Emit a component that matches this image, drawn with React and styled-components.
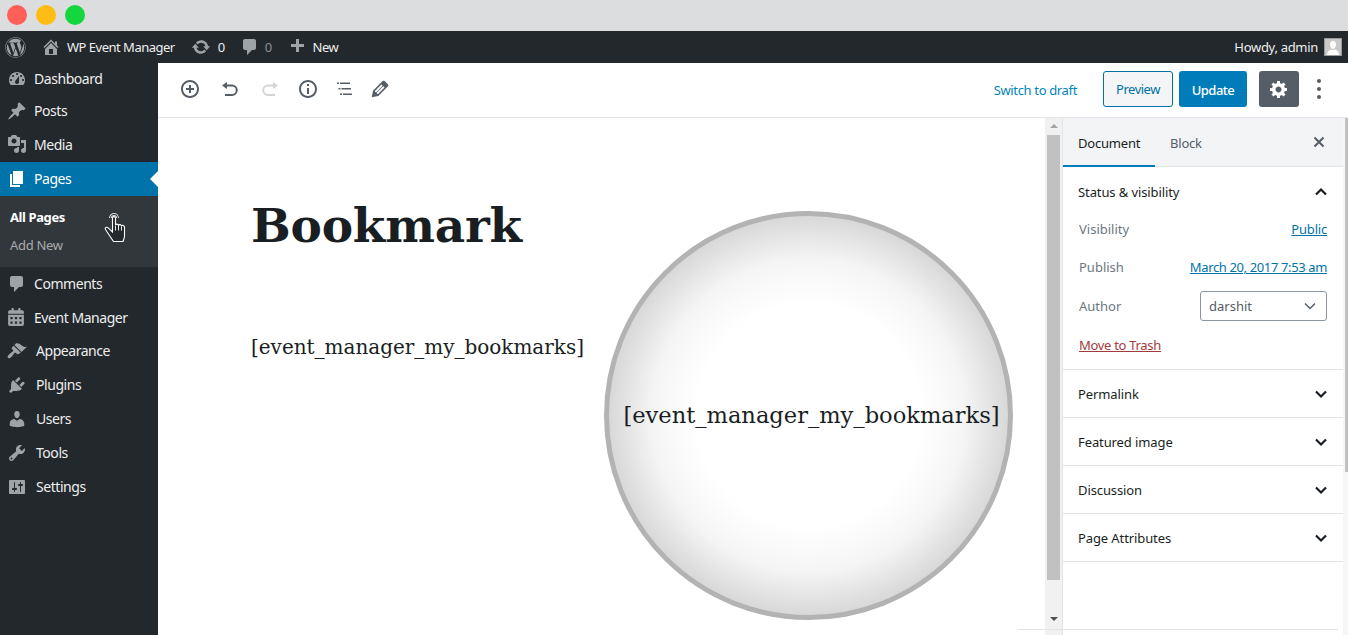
import React from "react";
import styled, { createGlobalStyle } from "styled-components";
import { FaWordpress, FaCalendarAlt } from "react-icons/fa";

const uiFont = `"Noto Sans", "Open Sans", sans-serif`;
const serifFont = `"DejaVu Serif", "Liberation Serif", serif`;

const GlobalStyle = createGlobalStyle`
  html, body {
    margin: 0;
    padding: 0;
    background: #fff;
    overflow: hidden;
  }
  * {
    box-sizing: border-box;
  }
`;

const Page = styled.div`
  width: 1348px;
  height: 635px;
  position: relative;
  overflow: hidden;
  display: flex;
  flex-direction: column;
  font-family: ${uiFont};
`;

const TitleBar = styled.div`
  height: 31px;
  flex: none;
  background: #dcdddf;
  display: flex;
  align-items: center;
  gap: 9px;
  padding: 0 0 1px 7px;
`;

const Light = styled.span`
  width: 20px;
  height: 20px;
  border-radius: 50%;
  background: ${({ $color }) => $color};
`;

const AdminBar = styled.div`
  height: 32px;
  flex: none;
  background: #23282d;
  color: #eee;
  font-size: 13px;
  display: flex;
  align-items: center;
  letter-spacing: -0.5px;
  svg {
    fill: #9ea3a8;
    flex: none;
  }
`;

const BarItem = styled.div`
  display: flex;
  align-items: center;
  gap: ${({ $gap }) => $gap || 6}px;
  margin-left: ${({ $left }) => $left}px;
`;

const MutedCount = styled.span`
  color: #8c8f94;
`;

const Howdy = styled.div`
  margin-left: auto;
  margin-right: 6px;
  display: flex;
  align-items: center;
  gap: 6px;
  letter-spacing: -0.3px;
`;

const Avatar = styled.div`
  width: 18px;
  height: 18px;
  background: #c9c9c9;
  border: 1px solid #999;
  display: flex;
  align-items: flex-end;
  justify-content: center;
  svg {
    fill: #fff;
  }
`;

const Body = styled.div`
  flex: 1;
  display: flex;
  min-height: 0;
`;

const Sidebar = styled.nav`
  width: 158px;
  flex: none;
  background: #23282d;
  color: #eee;
  font-size: 14px;
  letter-spacing: -0.45px;
`;

const MenuItem = styled.div`
  height: ${({ $height }) => $height || 34}px;
  display: flex;
  align-items: center;
  position: relative;
  padding-left: ${({ $pad }) => $pad || 7}px;
  padding-bottom: 1px;
  gap: ${({ $gap }) => $gap || 7}px;
  background: ${({ $active }) => ($active ? "#0073aa" : "transparent")};
  color: ${({ $active }) => ($active ? "#fff" : "#eee")};
  svg {
    flex: none;
    fill: ${({ $active }) => ($active ? "#fff" : "#9ea3a8")};
  }
  ${({ $active }) =>
    $active &&
    `&::after {
      content: "";
      position: absolute;
      right: 0;
      top: 9px;
      border: 8px solid transparent;
      border-right-color: #fff;
      border-left-width: 0;
    }`}
`;

const SubMenu = styled.div`
  height: 71px;
  background: #32373c;
  padding: 7px 0 0 10px;
  font-size: 13px;
  position: relative;
`;

const SubItem = styled.div`
  height: 28px;
  display: flex;
  align-items: center;
  letter-spacing: ${({ $current }) => ($current ? "-0.4px" : "-0.3px")};
  font-weight: ${({ $current }) => ($current ? 700 : 400)};
  color: ${({ $current }) => ($current ? "#fff" : "#a8abae")};
`;

const HandCursor = styled.svg`
  position: absolute;
  left: 103px;
  top: 16px;
`;

const Main = styled.div`
  flex: 1;
  min-width: 0;
  display: flex;
  flex-direction: column;
`;

const Toolbar = styled.div`
  height: 55px;
  flex: none;
  border-bottom: 1px solid #e2e4e7;
  display: flex;
  align-items: center;
  padding: 0 27px 2px 22px;
  background: #fff;
`;

const ToolIcons = styled.div`
  display: flex;
  align-items: center;
`;

const ToolSlot = styled.div`
  margin-right: ${({ $gap }) => $gap || 0}px;
  svg {
    display: block;
    fill: ${({ $disabled }) => ($disabled ? "#d2d4d6" : "#555d66")};
  }
`;

const ToolActions = styled.div`
  margin-left: auto;
  display: flex;
  align-items: center;
`;

const DraftLink = styled.span`
  color: #0085ba;
  font-size: 13px;
  letter-spacing: -0.35px;
  margin-right: 26px;
  padding-top: 1px;
`;

const PreviewButton = styled.div`
  width: 70px;
  height: 36px;
  background: #f3f5f6;
  border: 1px solid #0071a1;
  border-radius: 3px;
  color: #0071a1;
  font-size: 13px;
  letter-spacing: -0.5px;
  display: flex;
  align-items: center;
  justify-content: center;
  margin-right: 6px;
`;

const UpdateButton = styled.div`
  width: 68px;
  height: 36px;
  background: #007cba;
  border-radius: 3px;
  color: #fff;
  font-size: 13px;
  font-weight: 500;
  letter-spacing: -0.5px;
  padding-top: 1px;
  display: flex;
  align-items: center;
  justify-content: center;
  margin-right: 12px;
`;

const GearButton = styled.div`
  width: 40px;
  height: 36px;
  background: #555d66;
  border-radius: 3px;
  display: flex;
  align-items: center;
  justify-content: center;
  svg {
    fill: #fff;
  }
`;

const MoreDots = styled.div`
  width: 4px;
  margin-left: 18px;
  display: flex;
  flex-direction: column;
  gap: 4px;
  span {
    width: 4px;
    height: 4px;
    border-radius: 50%;
    background: #555d66;
  }
`;

const Workspace = styled.div`
  flex: 1;
  min-height: 0;
  display: flex;
`;

const Canvas = styled.div`
  width: 887px;
  flex: none;
  padding: 70px 0 0 93px;
  background: #fff;
  color: #191e23;
`;

const Title = styled.h1`
  margin: 0;
  font-family: ${serifFont};
  font-size: 47px;
  line-height: 76px;
  font-weight: 700;
  letter-spacing: -0.2px;
  color: #191e23;
`;

const Shortcode = styled.p`
  margin: 68px 0 0;
  font-family: ${serifFont};
  font-size: 20px;
  line-height: 30px;
  letter-spacing: -0.02px;
  white-space: nowrap;
`;

const Scroll = styled.div`
  width: 17px;
  flex: none;
  background: #f1f1f1;
  display: flex;
  flex-direction: column;
  align-items: center;
  padding-top: 6px;
`;

const Arrow = styled.span`
  width: 0;
  height: 0;
  border-left: 4px solid transparent;
  border-right: 4px solid transparent;
  border-${({ $dir }) => ($dir === "up" ? "bottom" : "top")}: 4px solid
    ${({ $dir }) => ($dir === "up" ? "#a3a3a3" : "#505050")};
`;

const Thumb = styled.div`
  width: 13px;
  height: 445px;
  margin: 7px 0 37px;
  background: #c1c1c1;
`;

const Settings = styled.aside`
  width: 281px;
  flex: none;
  background: #fff;
  border-left: 1px solid #e2e4e7;
  color: #191e23;
  font-size: 13px;
`;

const Tabs = styled.div`
  height: 49px;
  background: #f3f4f5;
  border-bottom: 1px solid #e2e4e7;
  display: flex;
  align-items: stretch;
  letter-spacing: -0.2px;
`;

const Tab = styled.div`
  width: ${({ $width }) => $width}px;
  display: flex;
  align-items: center;
  padding: 2px 0 0 15px;
  margin-bottom: -1px;
  color: ${({ $active }) => ($active ? "#191e23" : "#555d66")};
  border-bottom: 2px solid ${({ $active }) => ($active ? "#007cba" : "transparent")};
`;

const CloseIcon = styled.svg`
  margin: 17px 17px 0 auto;
  fill: none;
  stroke: #555d66;
  stroke-width: 2;
`;

const Section = styled.section`
  border-bottom: 1px solid #e2e4e7;
  padding: 0 16px 0 15px;
`;

const SectionHead = styled.div`
  height: ${({ $height }) => $height || 47}px;
  display: flex;
  align-items: center;
  justify-content: space-between;
  font-weight: 450;
  letter-spacing: -0.1px;
  svg {
    margin-right: -1px;
    fill: none;
    stroke: #191e23;
    stroke-width: 2.2;
  }
`;

const RowGroup = styled.div`
  margin-top: -7px;
  padding: 0 0 5px 1px;
`;

const Row = styled.div`
  height: ${({ $height }) => $height || 38}px;
  display: flex;
  align-items: center;
  justify-content: space-between;
  color: #6c7781;
`;

const SideLink = styled.span`
  color: #0073aa;
  text-decoration: underline;
  letter-spacing: ${({ $tight }) => ($tight ? "-0.37px" : "-0.2px")};
`;

const AuthorSelect = styled.div`
  width: 127px;
  height: 30px;
  border: 1px solid #8d96a0;
  border-radius: 3px;
  padding: 0 9px 0 8px;
  display: flex;
  align-items: center;
  justify-content: space-between;
  color: #555d66;
  svg {
    fill: none;
    stroke: #555d66;
    stroke-width: 1.5;
  }
`;

const TrashLink = styled.span`
  color: #a23c3c;
  text-decoration: underline;
  letter-spacing: -0.3px;
`;

const OuterScroll = styled.div`
  flex: 1;
  background: #f5f6f7;
  display: flex;
  justify-content: flex-end;
`;

const OuterThumb = styled.div`
  width: 3px;
  height: 354px;
  background: #c1c1c1;
`;

const BottomRule = styled.div`
  position: absolute;
  left: 1018px;
  top: 629px;
  width: 320px;
  height: 1px;
  background: #e2e4e7;
`;

const Magnifier = styled.div`
  position: absolute;
  left: 604px;
  top: 211px;
  width: 409px;
  height: 409px;
  border-radius: 50%;
  border: 5px solid #b3b3b3;
  background: radial-gradient(circle closest-side, #fff 0%, #fff 56%, #f5f5f5 78%, #d8d8d8 100%);
  display: flex;
  align-items: center;
  justify-content: center;
  font-family: ${serifFont};
  font-size: 22.6px;
  letter-spacing: -0.02px;
  color: #191e23;
  white-space: nowrap;
  padding-left: 6px;
  padding-bottom: 2px;
`;

const Dash = ({ d, size = 20 }) => (
  <svg width={size} height={size} viewBox="0 0 20 20" aria-hidden="true">
    <path d={d} />
  </svg>
);

const paths = {
  home: "M16 8.5l1.53 1.53-1.06 1.06L10 4.62l-6.47 6.47-1.06-1.06L10 2.5l4 4v-2h2v4zm-6-2.46l6 5.99V18H4v-5.97zM12 17v-5H8v5h4z",
  update:
    "M10.2 3.28c3.53 0 6.43 2.61 6.92 6h2.08l-3.5 4-3.5-4h2.32c-.45-1.97-2.21-3.45-4.32-3.45-1.45 0-2.73.71-3.54 1.78L4.95 5.66C6.23 4.2 8.11 3.28 10.2 3.28zm-.4 13.44c-3.52 0-6.43-2.61-6.92-6H.8l3.5-4c1.17 1.33 2.33 2.67 3.5 4H5.48c.45 1.97 2.21 3.45 4.32 3.45 1.45 0 2.73-.71 3.54-1.78l1.71 1.95c-1.28 1.46-3.15 2.38-5.25 2.38z",
  comment:
    "M5 2h9c1.1 0 2 .9 2 2v7c0 1.1-.9 2-2 2h-2l-5 5v-5H5c-1.1 0-2-.9-2-2V4c0-1.1.9-2 2-2z",
  plus: "M17 7v3h-5v5H9v-5H4V7h5V2h3v5h5z",
  dashboard:
    "M3.76 16h12.48c1.1-1.37 1.76-3.11 1.76-5 0-4.42-3.58-8-8-8s-8 3.58-8 8c0 1.89.66 3.63 1.76 5zM10 4c.55 0 1 .45 1 1s-.45 1-1 1-1-.45-1-1 .45-1 1-1zM6 6c.55 0 1 .45 1 1s-.45 1-1 1-1-.45-1-1 .45-1 1-1zm8 0c.55 0 1 .45 1 1s-.45 1-1 1-1-.45-1-1 .45-1 1-1zm-5.37 5.55L12 7v6c0 1.1-.9 2-2 2s-2-.9-2-2c0-.57.24-1.08.63-1.45zM4 10c.55 0 1 .45 1 1s-.45 1-1 1-1-.45-1-1 .45-1 1-1zm12 0c.55 0 1 .45 1 1s-.45 1-1 1-1-.45-1-1 .45-1 1-1z",
  post: "M10.44 3.02l1.82-1.82 6.36 6.35-1.83 1.82c-1.05-.68-2.48-.57-3.41.36l-.75.75c-.92.93-1.04 2.35-.35 3.41l-1.83 1.82-2.41-2.41-2.8 2.79c-.42.42-3.38 2.71-3.8 2.29s1.86-3.39 2.28-3.81l2.79-2.79L4.1 9.36l1.83-1.82c1.05.69 2.48.57 3.4-.36l.75-.75c.93-.92 1.05-2.35.36-3.41z",
  media:
    "M13 11V4c0-.55-.45-1-1-1h-1.67L9 1H5L3.67 3H2c-.55 0-1 .45-1 1v7c0 .55.45 1 1 1h10c.55 0 1-.45 1-1zM7 4.5c1.38 0 2.5 1.12 2.5 2.5S8.38 9.5 7 9.5 4.5 8.38 4.5 7 5.62 4.5 7 4.5zM14 6h5v10.5c0 1.38-1.12 2.5-2.5 2.5S14 17.88 14 16.5s1.12-2.5 2.5-2.5c.17 0 .34.02.5.05V9h-3V6zm-4 8.05V13h2v3.5c0 1.38-1.12 2.5-2.5 2.5S7 17.88 7 16.5 8.12 14 9.5 14c.17 0 .34.02.5.05z",
  page: "M6 15V2h10v13H6zm-1 1h8v2H3V5h2v11z",
  appearance:
    "M14.48 11.06L7.41 3.99l1.5-1.5c.5-.56 2.3-.47 3.51.32 1.21.8 1.43 1.28 2.91 2.1 1.18.64 2.45 1.26 4.67.85zm-.71.71L6.7 4.7 4.93 6.47c-.39.39-.39 1.02 0 1.41l1.06 1.06c.39.39.39 1.03 0 1.42-.6.6-1.43 1.11-2.21 1.7-.78.6-1.54 1.3-2.45 2.11-.76.76-1.04 2-.3 2.74.74.74 1.98.46 2.74-.3.81-.91 1.51-1.67 2.11-2.45.59-.78 1.1-1.61 1.7-2.21.39-.39 1.03-.39 1.42 0l1.06 1.06c.39.39 1.02.39 1.41 0z",
  plugins:
    "M13.11 4.36L9.87 7.6 8 5.73l3.24-3.24c.35-.34 1.05-.2 1.56.32.52.51.66 1.21.31 1.55zm-8 1.77l.91-1.12 9.01 9.01-1.19.84c-.71.71-2.63 1.16-3.82 1.16H6.14L4.9 17.26c-.59.59-1.54.59-2.12 0-.59-.58-.59-1.53 0-2.12l1.24-1.24v-3.88c0-1.13.4-3.19 1.09-3.89zm7.26 3.97l3.24-3.24c.34-.35 1.04-.21 1.55.31.52.51.66 1.21.31 1.55l-3.24 3.25z",
  users:
    "M10 9.25c-2.27 0-2.73-3.44-2.73-3.44C7 4.02 7.82 2 9.97 2c2.16 0 2.98 2.02 2.71 3.81 0 0-.41 3.44-2.68 3.44zm0 2.57L12.72 10c2.39 0 4.52 2.33 4.52 4.53v2.49s-3.65 1.13-7.24 1.13c-3.65 0-7.24-1.13-7.24-1.13v-2.49c0-2.25 1.94-4.48 4.47-4.48z",
  tools:
    "M16.68 9.77c-1.34 1.34-3.3 1.67-4.95.99l-5.41 6.52c-.99.99-2.59.99-3.58 0s-.99-2.59 0-3.57l6.52-5.42c-.68-1.65-.35-3.61.99-4.95 1.28-1.28 3.12-1.62 4.72-1.06l-2.89 2.89 2.82 2.82 2.86-2.87c.53 1.58.18 3.39-1.08 4.65zM3.81 16.21c.4.39 1.04.39 1.43 0 .4-.4.4-1.04 0-1.43-.39-.4-1.03-.4-1.43 0-.39.39-.39 1.03 0 1.43z",
  settings:
    "M18 16V4c0-.55-.45-1-1-1H3c-.55 0-1 .45-1 1v12c0 .55.45 1 1 1h14c.55 0 1-.45 1-1zM8 11h1c.55 0 1 .45 1 1s-.45 1-1 1H8v1.5c0 .28-.22.5-.5.5s-.5-.22-.5-.5V13H6c-.55 0-1-.45-1-1s.45-1 1-1h1V5.5c0-.28.22-.5.5-.5s.5.22.5.5V11zm5-2h-1c-.55 0-1-.45-1-1s.45-1 1-1h1V5.5c0-.28.22-.5.5-.5s.5.22.5.5V7h1c.55 0 1 .45 1 1s-.45 1-1 1h-1v5.5c0 .28-.22.5-.5.5s-.5-.22-.5-.5V9z",
  inserter:
    "M10 1c-5 0-9 4-9 9s4 9 9 9 9-4 9-9-4-9-9-9zm0 16c-3.9 0-7-3.1-7-7s3.1-7 7-7 7 3.1 7 7-3.1 7-7 7zm1-11H9v3H6v2h3v3h2v-3h3V9h-3V6z",
  undo: "M7 3v2.5h5a5.75 5.75 0 0 1 0 11.5H5v-2h7a3.75 3.75 0 0 0 0-7.5H7V10L2 6.5z",
  redo: "M13 3v2.5H8a5.75 5.75 0 0 0 0 11.5h7v-2H8a3.75 3.75 0 0 1 0-7.5h5V10l5-3.5z",
  info: "M10 1c-5 0-9 4-9 9s4 9 9 9 9-4 9-9-4-9-9-9zm0 16c-3.9 0-7-3.1-7-7s3.1-7 7-7 7 3.1 7 7-3.1 7-7 7zM9 9h2v6H9V9zm0-4h2v2H9V5z",
  list: "M3 3.5h2V5H3zm3 0h10V5H6zM4.5 9h2v1.5h-2zm3 0H17v1.5H7.5zM6 14.5h2V16H6zm3 0h9V16H9z",
  pencil:
    "M13.89 3.39l2.71 2.72c.46.46.42 1.24.03 1.64l-8.01 8.02-5.56 1.16 1.16-5.58s7.6-7.63 7.99-8.03c.39-.39 1.22-.39 1.68.07zm-2.73 2.79l-5.59 5.61 1.11 1.11 5.54-5.65zm-2.97 8.23l5.58-5.6-1.07-1.08-5.59 5.6z",
  gear: "M18 12h-2.18c-.17.7-.44 1.35-.81 1.93l1.54 1.54-2.1 2.1-1.54-1.54c-.58.36-1.23.63-1.91.79V19H8v-2.18c-.68-.16-1.33-.43-1.91-.79l-1.54 1.54-2.12-2.12 1.54-1.54c-.36-.58-.63-1.23-.79-1.91H1V9.03h2.17c.16-.7.44-1.35.8-1.94L2.43 5.55l2.1-2.1 1.54 1.54c.58-.37 1.24-.64 1.93-.81V2h3v2.18c.68.16 1.33.43 1.91.79l1.54-1.54 2.12 2.12-1.54 1.54c.36.59.64 1.24.8 1.94H18V12zm-8.5 1.5c1.66 0 3-1.34 3-3s-1.34-3-3-3-3 1.34-3 3 1.34 3 3 3z",
};

const Chevron = ({ up, size = 14 }) => (
  <svg width={size} height={size} viewBox="0 0 14 14" aria-hidden="true">
    <path d={up ? "M2 9.5 7 4.5l5 5" : "M2 4.5 7 9.5l5-5"} />
  </svg>
);

const Hand = () => (
  <HandCursor width="24" height="32" viewBox="0 0 24 32" aria-hidden="true">
    <g fill="none" stroke="#d9d9d9" strokeWidth="1.1">
      <path d="M6.5 6a4.5 4.5 0 0 1 9 0" />
      <path d="M8.5 6a2.5 2.5 0 0 1 5 0" />
    </g>
    <path
      d="M9.5 6c0-1.8 3-1.8 3 0v7c.3-1.2 2.7-1.2 3 .3.4-1 2.6-.9 3 .5.5-.8 2.8-.4 3 1.2V24c0 2-1 3.5-1.5 5.5H10.5L2.5 17.5c-1-1.6 1-3 2.4-1.8L9.5 20z"
      fill="#23282d"
      stroke="#fff"
      strokeWidth="1.1"
    />
    <path d="M12.5 13.5v5M15.5 13.5v5M18.5 14.5v4" stroke="#fff" strokeWidth="0.9" />
  </HandCursor>
);

const menuTop = [
  { label: "Dashboard", icon: "dashboard", height: 32 },
  { label: "Posts", icon: "post", height: 32 },
  { label: "Media", icon: "media", height: 35 },
];

const menuBottom = ["appearance", "plugins", "users", "tools", "settings"];
const labels = {
  appearance: "Appearance",
  plugins: "Plugins",
  users: "Users",
  tools: "Tools",
  settings: "Settings",
};

const collapsed = ["Permalink", "Featured image", "Discussion", "Page Attributes"];

export default function App() {
  return (
    <Page>
      <GlobalStyle />
      <TitleBar>
        <Light $color="#ff5f56" />
        <Light $color="#ffbd13" />
        <Light $color="#14d73f" />
      </TitleBar>

      <AdminBar>
        <BarItem $left={5}>
          <FaWordpress size={21} />
        </BarItem>
        <BarItem $left={15}>
          <Dash d={paths.home} />
          WP Event Manager
        </BarItem>
        <BarItem $left={16} $gap={7}>
          <Dash d={paths.update} />0
        </BarItem>
        <BarItem $left={15} $gap={5}>
          <Dash d={paths.comment} />
          <MutedCount>0</MutedCount>
        </BarItem>
        <BarItem $left={15} $gap={6}>
          <Dash d={paths.plus} />
          New
        </BarItem>
        <Howdy>
          Howdy, admin
          <Avatar>
            <svg width="14" height="15" viewBox="0 0 14 15" aria-hidden="true">
              <path d="M7 1c2 0 3 1.6 3 3.6S8.8 9 7 9 4 6.6 4 4.6 5 1 7 1zM1 15c0-3 2-5 4-5.5 1 .7 3 .7 4 0 2 .5 4 2.5 4 5.500z" />
            </svg>
          </Avatar>
        </Howdy>
      </AdminBar>

      <Body>
        <Sidebar>
          {menuTop.map((item) => (
            <MenuItem key={item.label} $height={item.height}>
              <Dash d={paths[item.icon]} />
              {item.label}
            </MenuItem>
          ))}
          <MenuItem $active>
            <Dash d={paths.page} />
            Pages
          </MenuItem>
          <SubMenu>
            <SubItem $current>All Pages</SubItem>
            <SubItem>Add New</SubItem>
            <Hand />
          </SubMenu>
          <MenuItem>
            <Dash d={paths.comment} />
            Comments
          </MenuItem>
          <MenuItem $height={33} $gap={9}>
            <FaCalendarAlt size={18} />
            Event Manager
          </MenuItem>
          {menuBottom.map((name) => (
            <MenuItem key={name} $gap={9}>
              <Dash d={paths[name]} />
              {labels[name]}
            </MenuItem>
          ))}
        </Sidebar>

        <Main>
          <Toolbar>
            <ToolIcons>
              <ToolSlot $gap={20}>
                <Dash d={paths.inserter} />
              </ToolSlot>
              <ToolSlot $gap={20}>
                <Dash d={paths.undo} />
              </ToolSlot>
              <ToolSlot $gap={18} $disabled>
                <Dash d={paths.redo} />
              </ToolSlot>
              <ToolSlot $gap={16}>
                <Dash d={paths.info} />
              </ToolSlot>
              <ToolSlot $gap={14}>
                <Dash d={paths.list} />
              </ToolSlot>
              <ToolSlot>
                <Dash d={paths.pencil} size={24} />
              </ToolSlot>
            </ToolIcons>
            <ToolActions>
              <DraftLink>Switch to draft</DraftLink>
              <PreviewButton>Preview</PreviewButton>
              <UpdateButton>Update</UpdateButton>
              <GearButton>
                <Dash d={paths.gear} />
              </GearButton>
              <MoreDots>
                <span />
                <span />
                <span />
              </MoreDots>
            </ToolActions>
          </Toolbar>

          <Workspace>
            <Canvas>
              <Title>Bookmark</Title>
              <Shortcode>[event_manager_my_bookmarks]</Shortcode>
            </Canvas>
            <Scroll>
              <Arrow $dir="up" />
              <Thumb />
              <Arrow $dir="down" />
            </Scroll>
            <Settings>
              <Tabs>
                <Tab $active $width={92}>
                  Document
                </Tab>
                <Tab $width={60}>Block</Tab>
                <CloseIcon width="14" height="14" viewBox="0 0 14 14" aria-hidden="true">
                  <path d="M2.5 2.5l9 9M11.5 2.5l-9 9" />
                </CloseIcon>
              </Tabs>
              <Section>
                <SectionHead $height={50}>
                  Status &amp; visibility
                  <Chevron up />
                </SectionHead>
                <RowGroup>
                  <Row>
                    Visibility
                    <SideLink>Public</SideLink>
                  </Row>
                  <Row>
                    Publish
                    <SideLink $tight>March 20, 2017 7:53 am</SideLink>
                  </Row>
                  <Row $height={40}>
                    Author
                    <AuthorSelect>
                      darshit
                      <Chevron />
                    </AuthorSelect>
                  </Row>
                  <Row>
                    <TrashLink>Move to Trash</TrashLink>
                  </Row>
                </RowGroup>
              </Section>
              {collapsed.map((name) => (
                <Section key={name}>
                  <SectionHead>
                    {name}
                    <Chevron />
                  </SectionHead>
                </Section>
              ))}
            </Settings>
            <OuterScroll>
              <OuterThumb />
            </OuterScroll>
          </Workspace>
        </Main>
      </Body>

      <BottomRule />
      <Magnifier>[event_manager_my_bookmarks]</Magnifier>
    </Page>
  );
}
